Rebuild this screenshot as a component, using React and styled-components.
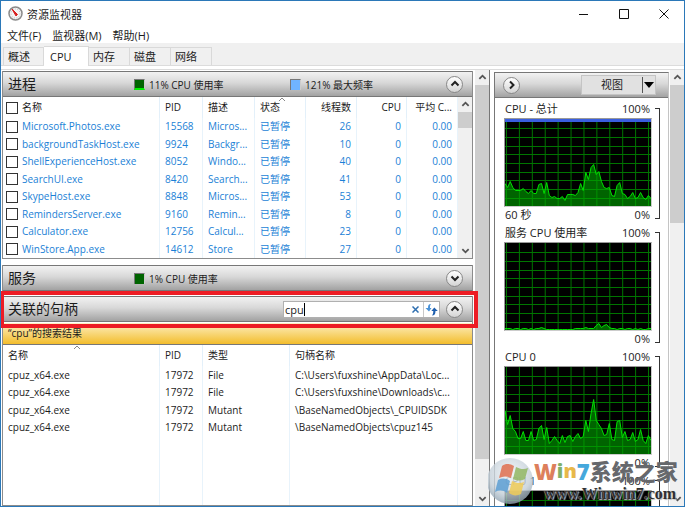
import React, { useState } from 'react';
import styled, { createGlobalStyle } from 'styled-components';

const GlobalStyle = createGlobalStyle`
   * {
      box-sizing: border-box;
   }
   body {
      margin: 0;
      background: #fff;
      color: #1c1c1c;
      font-family: "Open Sans", "Noto Sans CJK SC", sans-serif;
      font-size: 10px;
   }
   button, input {
      font: inherit;
      color: inherit;
      margin: 0;
      padding: 0;
      border: 0;
      border-radius: 0;
      background: none;
   }
`;

const processes = [
   ['Microsoft.Photos.exe', 15568, 'Micros...', 26],
   ['backgroundTaskHost.exe', 9924, 'Backgr...', 10],
   ['ShellExperienceHost.exe', 8052, 'Windo...', 40],
   ['SearchUI.exe', 8420, 'Search...', 41],
   ['SkypeHost.exe', 8848, 'Micros...', 53],
   ['RemindersServer.exe', 9160, 'Remin...', 8],
   ['Calculator.exe', 12756, 'Calcul...', 23],
   ['WinStore.App.exe', 14612, 'Store', 27],
];

const handles = [
   ['File', 'C:\\Users\\fuxshine\\AppData\\Loc...'],
   ['File', 'C:\\Users\\fuxshine\\Downloads\\c...'],
   ['Mutant', '\\BaseNamedObjects\\_CPUIDSDK'],
   ['Mutant', '\\BaseNamedObjects\\cpuz145'],
];

const totalLoad = [
   22, 18, 24, 18, 15, 15, 15, 17, 14, 12, 15, 12, 12, 21, 22, 12, 23, 10, 8,
   9, 7, 7, 9, 5, 11, 11, 11, 10, 13, 22, 15, 33, 26, 38, 41, 31, 34, 24, 18,
   17, 18, 10, 9, 20, 23, 12, 11, 7, 9, 13, 7, 8, 13, 8, 6, 10, 7,
];

const serviceLoad = [
   1, 1, 1, 0, 1, 1, 0, 1, 1, 0, 1, 0, 1, 1, 2, 1, 0, 0, 0,
   0, 0, 0, 0, 0, 0, 0, 0, 1, 1, 1, 1, 2, 1, 1, 1, 4, 6, 2, 4,
   5, 2, 1, 1, 0, 1, 1, 0, 1, 1, 0, 1, 0, 1, 0, 0, 1, 1,
];

const coreLoad = [
   43, 29, 38, 25, 22, 15, 15, 22, 13, 13, 22, 13, 14, 25, 28, 14, 26, 10, 13,
   17, 13, 10, 18, 11, 17, 18, 12, 17, 20, 15, 17, 33, 22, 40, 54, 33, 29, 25,
   18, 19, 30, 14, 13, 32, 33, 16, 22, 13, 14, 21, 12, 14, 24, 13, 10, 18, 13,
];

const Window = styled.div`
   position: relative;
   display: flex;
   flex-direction: column;
   height: 100vh;
   overflow: hidden;
   border: 1px solid #2b78b8;
   background: #fff;
`;

const TitleBar = styled.header`
   display: flex;
   align-items: center;
   flex: none;
   height: 25px;
   padding-left: 7px;
`;

const WindowTitle = styled.h1`
   flex: 1;
   margin: 0 0 0 4px;
   font-size: 11px;
   font-weight: normal;
`;

const WindowButton = styled.button`
   display: flex;
   align-items: center;
   justify-content: center;
   width: 40px;
   height: 25px;
`;

const MenuBar = styled.nav`
   display: flex;
   align-items: center;
   flex: none;
   gap: 11px;
   height: 17px;
   padding-left: 6px;
   font-size: 11px;
`;

const TabBar = styled.div`
   display: flex;
   align-items: flex-end;
   flex: none;
   height: 23px;
   padding-left: 2px;
   background: #f0f0f0;
   border-bottom: 1px solid #dcdcdc;
`;

const Tab = styled.button`
   height: ${(props) => (props.$active ? 20 : 18)}px;
   margin-bottom: ${(props) => (props.$active ? -1 : 0)}px;
   padding-left: ${(props) => (props.$active ? 6 : 4)}px;
   width: ${(props) => (props.$active ? 45 : 41)}px;
   border: 1px solid #d9d9d9;
   border-bottom: 0;
   border-left-width: ${(props) => (props.$first ? 1 : 0)}px;
   background: ${(props) => (props.$active ? '#fff' : '#f0f0f0')};
   font-size: 11px;
   line-height: 16px;
   text-align: left;
   white-space: nowrap;
`;

const Body = styled.main`
   display: flex;
   flex: 1;
   min-height: 0;
   margin-top: 3px;
   border-top: 1px solid #dcdcdc;
`;

const LeftPane = styled.div`
   display: flex;
   flex-direction: column;
   flex: 1;
   min-width: 0;
   margin: 1px 2px 0 1px;
`;

const Section = styled.section`
   position: relative;
   border: 1px solid #8c8c8c;
   border-top: 0;
   margin-bottom: ${(props) => props.$gap || 0}px;
   flex: ${(props) => (props.$grow ? 1 : 'none')};
   display: flex;
   flex-direction: column;
`;

const SectionHeader = styled.div`
   position: relative;
   display: flex;
   align-items: center;
   height: 26px;
   padding: 0 9px 0 5px;
   border-top: 1px solid #777;
   border-bottom: 1px solid #777;
   background: linear-gradient(#f2f2f2, #d8d8d8 45%, #a2a2a2);
`;

const SectionTitle = styled.h2`
   flex: none;
   width: 126px;
   margin: 0;
   font-size: 14px;
   font-weight: normal;
   line-height: 20px;
   white-space: nowrap;
`;

const Meter = styled.span`
   display: flex;
   align-items: center;
   gap: 4px;
   width: 159px;
   font-size: 10px;
`;

const Swatch = styled.i`
   width: 11px;
   height: 11px;
   border: 1px solid #ccc;
   border-top-color: #777;
   border-left-color: #777;
   background: ${(props) => props.$color};
   border-bottom: ${(props) => props.$level || 0}px solid #00f000;
`;

const RoundButton = styled.button`
   display: flex;
   align-items: center;
   justify-content: center;
   flex: none;
   width: 17px;
   height: 17px;
   margin-left: ${(props) => (props.$left ? 0 : 'auto')};
   border: 1px solid #888;
   border-radius: 50%;
   background: linear-gradient(#fff, #d4d4d4);
`;

// Red frame drawn around the header of the handle search
const Marker = styled.div`
   position: absolute;
   z-index: 2;
   inset: -5px -6px auto -3px;
   height: 37px;
   border: 4px solid #ed1c24;
   pointer-events: none;
`;

const SearchBox = styled.div`
   position: relative;
   display: flex;
   align-items: center;
   width: 157px;
   height: 17px;
   margin-left: auto;
   margin-right: 6px;
   border: 1px solid #b0b0b0;
   background: #fff;
`;

const SearchInput = styled.input`
   flex: 1;
   min-width: 0;
   padding-left: 1px;
   font-size: 11px;
   line-height: 15px;
   outline: 0;
   caret-color: transparent;
`;

const Caret = styled.i`
   position: absolute;
   left: 20px;
   top: 1px;
   width: 1px;
   height: 13px;
   background: #000;
`;

const SearchButton = styled.button`
   display: flex;
   align-items: center;
   justify-content: center;
   width: 16px;
   height: 15px;
   border-left: ${(props) => (props.$split ? '1px solid #c8c8c8' : 0)};
`;

const ResultBar = styled.div`
   height: 22px;
   margin-top: 1px;
   padding-left: 5px;
   border-bottom: 1px solid #777;
   background: linear-gradient(#fdf0c4, #f3bd2c);
   line-height: 21px;
`;

const TableArea = styled.div`
   display: flex;
   flex: 1;
   align-items: stretch;
`;

const Table = styled.table`
   flex: 1;
   width: 100%;
   height: ${(props) => props.$height};
   table-layout: fixed;
   border-collapse: separate;
   border-spacing: 0;
   color: ${(props) => props.$color};
   border-right: 1px solid #e8f3fb;
`;

const HeadCell = styled.th`
   position: relative;
   width: ${(props) => props.$width || 'auto'};
   height: 21px;
   padding: 0 5px;
   border-left: ${(props) => (props.$first ? 0 : '1px solid #e3f0fa')};
   color: #1c1c1c;
   font-weight: normal;
   line-height: 15px;
   text-align: ${(props) => (props.$right ? 'right' : 'left')};
   white-space: nowrap;
`;

const Cell = styled.td`
   padding: 0 5px;
   border-left: ${(props) => (props.$first ? 0 : '1px solid #e8f3fb')};
   line-height: 15px;
   text-align: ${(props) => (props.$right ? 'right' : 'left')};
   white-space: nowrap;
`;

const HandleRow = styled.tr`
   height: 17px;
   &:nth-child(odd) {
      height: 18px;
   }
`;

const HandleArea = styled(TableArea)`
   padding-right: 14px;
`;

const SortMark = styled.svg`
   position: absolute;
   top: 0;
   left: 45%;
   width: 8px;
   height: 5px;
`;

const CheckLabel = styled.label`
   display: flex;
   align-items: center;
   gap: 4px;
   margin-left: -2px;
`;

const Check = styled.input`
   appearance: none;
   width: 12px;
   height: 12px;
   border: 1px solid #333;
   background: ${(props) => (props.checked ? '#1b7fd6' : '#fff')};
`;

const Bar = styled.div`
   display: flex;
   flex-direction: column;
   flex: none;
   width: 14px;
   background: #f0f0f0;
`;

const BarButton = styled.button`
   display: flex;
   align-items: center;
   justify-content: center;
   height: 15px;
`;

const Track = styled.div`
   flex: 1;
`;

const Thumb = styled.div`
   height: ${(props) => props.$size};
   background: #cdcdcd;
`;

const RightPane = styled.aside`
   display: flex;
   flex: none;
   width: 195px;
   padding-left: 4px;
   border-left: 1px solid #777;
`;

const ChartPanel = styled.div`
   flex: 1;
   margin: 2px 1px 0 0;
   border: 1px solid #777;
   border-right-color: #c4c4c4;
   border-bottom: 0;
   overflow: hidden;
`;

const ChartHeader = styled.div`
   display: flex;
   align-items: center;
   justify-content: space-between;
   height: 25px;
   padding: 0 12px 0 8px;
   border-bottom: 1px solid #777;
   background: linear-gradient(#f2f2f2, #d8d8d8 45%, #a2a2a2);
`;

const ViewButton = styled.div`
   display: flex;
   width: 75px;
   height: 20px;
   border: 1px solid #c4c4c4;
   background: #e1e1e1;
`;

const ViewLabel = styled.button`
   flex: 1;
   font-size: 11px;
   line-height: 16px;
`;

const ViewArrow = styled.button`
   display: flex;
   align-items: center;
   width: 13px;
   margin: 1px 0;
   border-left: 1px solid #555;
`;

const ChartBlock = styled.figure`
   display: flex;
   height: 124px;
   margin: 0;
   padding: 3px 8px 0 9px;
   font-size: 11px;
`;

const ChartColumn = styled.div`
   flex: 1;
   min-width: 0;
`;

const ChartLine = styled.figcaption`
   display: flex;
   justify-content: space-between;
   height: 17px;
   padding: 0 2px 0 1px;
   line-height: 16px;
   white-space: nowrap;
`;

const Plot = styled.svg`
   display: block;
   width: 100%;
   height: 89px;
   border: 1px solid #999;
   border-right-color: #ccc;
   border-bottom-color: #ccc;
   background: #000;
`;

const Bracket = styled.div`
   width: 5px;
   height: 111px;
   margin: 7px 0 0 3px;
   border: 1px solid #333;
   border-left: 0;
`;

const Watermark = styled.div`
   position: absolute;
   z-index: 3;
   right: 2px;
   bottom: 0;
   display: flex;
   width: 194px;
   height: 49px;
   white-space: nowrap;
   pointer-events: none;
`;

const Brand = styled.div`
   display: flex;
   flex-direction: column;
`;

const BrandName = styled.div`
   display: flex;
   align-items: center;
   height: 28px;
   font-size: 22px;
   font-weight: 900;
   line-height: 28px;
   color: #66686c;
`;

const Letter = styled.span`
   color: ${(props) => props.$color};
   font-size: ${(props) => props.$size}px;
`;

const BrandUrl = styled.div`
   height: 18px;
   padding-left: 10px;
   font-family: "Liberation Serif", serif;
   font-size: 16px;
   font-weight: bold;
   line-height: 18px;
   color: #303030;
   text-shadow: 0 0 1px #ddd, 1px 1px 1px #bbb;
`;

const chevrons = {
   up: 'M1.5 6 5 2.5 8.5 6',
   down: 'M1.5 3 5 6.5 8.5 3',
   right: 'M3 1 6.5 4.5 3 8',
};

const Chevron = ({ to, size = 10, color = '#222', weight = 2 }) => (
   <svg width={size} height={size} viewBox="0 0 10 9">
      <path d={chevrons[to]} fill="none" stroke={color} strokeWidth={weight} />
   </svg>
);

const Scrollbar = ({ thumb }) => (
   <Bar>
      <BarButton aria-label="向上滚动">
         <Chevron to="up" size={9} color="#555" />
      </BarButton>
      <Track>
         <Thumb $size={thumb} />
      </Track>
      <BarButton aria-label="向下滚动">
         <Chevron to="down" size={9} color="#555" />
      </BarButton>
   </Bar>
);

const Sorted = () => (
   <SortMark viewBox="0 0 8 5">
      <path d="M1 4 4 1 7 4" fill="none" stroke="#888" />
   </SortMark>
);

const GaugeIcon = () => (
   <svg width="15" height="15" viewBox="0 0 15 15">
      <circle cx="7.5" cy="7.5" r="6.5" fill="#f4f4f4" stroke="#8a8a8a" strokeWidth="1.5" />
      <circle cx="7.5" cy="7.5" r="4.5" fill="none" stroke="#bbb" strokeDasharray="1 1.5" />
      <path d="M4 3 9.5 8.5 8 10Z" fill="#d81e1e" stroke="#d81e1e" />
   </svg>
);

const RefreshIcon = () => (
   <svg width="13" height="13" viewBox="0 0 13 13">
      <path d="M6 1C3.500 1 3 2.500 3 5H.5L4 8.500 6.500 5H5C5 3 5 2.500 6 1Z" fill="#4b93d8" />
      <path d="M7 12.500C9.500 12.500 10.500 11 10.500 8H12.800L9.300 4.500 6.300 8H8.300C8.300 10 8 11 7 12.500Z" fill="#1f5fae" />
   </svg>
);

const OrbLogo = () => (
   <svg width="46" height="48" viewBox="0 0 46 48">
      <defs>
         <radialGradient id="orb" cx="50%" cy="35%" r="65%">
            <stop offset="0" stopColor="#eef4f8" />
            <stop offset="0.7" stopColor="#c3ced7" />
            <stop offset="1" stopColor="#8ea1b0" />
         </radialGradient>
      </defs>
      <circle cx="22" cy="24" r="23" fill="url(#orb)" opacity="0.8" />
      <g opacity="0.85">
         <path d="M14 9C18 6 22 7 26 9L23 21C19 19 15 19 11 21Z" fill="#e07050" />
         <path d="M28 10C32 12 36 13 40 11L37 22C33 24 29 24 25 22Z" fill="#93b864" />
         <path d="M10 23C14 21 18 21 22 24L19 36C15 33 11 33 7 35Z" fill="#5d9fd4" />
         <path d="M24 24C28 26 32 27 36 25L33 37C29 39 25 39 21 36Z" fill="#f0cc58" />
      </g>
   </svg>
);

const columnLines = [1, 14, 27, 40, 53, 66, 79, 92, 105, 118, 131, 144];
const rowLines = [9, 18, 27, 35, 44, 53, 61, 70, 79];

const LoadChart = ({ title, values, span, capped }) => {
   const line = values.map((v, i) => `${(i * 147) / (values.length - 1)},${86.5 - v}`).join(' ');

   return (
      <ChartBlock>
         <ChartColumn>
            <ChartLine>
               <span>{title}</span>
               <span>100%</span>
            </ChartLine>
            <Plot viewBox="0 0 147 87" preserveAspectRatio="none">
               <polygon points={`0,87 ${line} 147,87`} fill="#006400" />
               <g stroke="#00a800" opacity="0.7">
                  {columnLines.map((x) => <path key={x} d={`M${x + 0.5} 0V87`} />)}
                  {rowLines.map((y) => <path key={y} d={`M0 ${y + 0.5}H147`} />)}
               </g>
               <polyline points={line} fill="none" stroke="#00e000" />
               {capped && <rect width="147" height="3" fill="#3a5fe0" />}
            </Plot>
            <ChartLine as="div">
               <span>{span}</span>
               <span>0%</span>
            </ChartLine>
         </ChartColumn>
         <Bracket />
      </ChartBlock>
   );
};

const ProcessTable = () => {
   const [picked, setPicked] = useState([]);
   const toggle = (name) => setPicked(
      picked.includes(name) ? picked.filter((n) => n !== name) : [...picked, name]
   );
   const all = picked.length === processes.length;

   return (
      <Table $color="#1b7fd6" $height="161px">
         <thead>
            <tr>
               <HeadCell $first>
                  <CheckLabel>
                     <Check
                        type="checkbox"
                        checked={all}
                        onChange={() => setPicked(all ? [] : processes.map((p) => p[0]))}
                     />
                     名称
                  </CheckLabel>
               </HeadCell>
               <HeadCell $width="43px">PID</HeadCell>
               <HeadCell $width="52px">描述</HeadCell>
               <HeadCell $width="51px">状态<Sorted /></HeadCell>
               <HeadCell $width="51px" $right>线程数</HeadCell>
               <HeadCell $width="50px" $right>CPU</HeadCell>
               <HeadCell $width="51px" $right>平均 C...</HeadCell>
            </tr>
         </thead>
         <tbody>
            {processes.map(([name, pid, about, threads]) => (
               <tr key={name}>
                  <Cell $first>
                     <CheckLabel>
                        <Check
                           type="checkbox"
                           checked={picked.includes(name)}
                           onChange={() => toggle(name)}
                        />
                        {name}
                     </CheckLabel>
                  </Cell>
                  <Cell>{pid}</Cell>
                  <Cell>{about}</Cell>
                  <Cell>已暂停</Cell>
                  <Cell $right>{threads}</Cell>
                  <Cell $right>0</Cell>
                  <Cell $right>0.00</Cell>
               </tr>
            ))}
         </tbody>
      </Table>
   );
};

const HandleTable = () => (
   <Table $color="#1c1c1c" $height="100%">
      <thead>
         <tr>
            <HeadCell $first>名称<Sorted /></HeadCell>
            <HeadCell $width="43px">PID</HeadCell>
            <HeadCell $width="87px">类型</HeadCell>
            <HeadCell $width="168px">句柄名称</HeadCell>
         </tr>
      </thead>
      <tbody>
         {handles.map(([type, path]) => (
            <HandleRow key={path}>
               <Cell $first>cpuz_x64.exe</Cell>
               <Cell>17972</Cell>
               <Cell>{type}</Cell>
               <Cell>{path}</Cell>
            </HandleRow>
         ))}
         <tr>
            <Cell $first />
            <Cell />
            <Cell />
            <Cell />
         </tr>
      </tbody>
   </Table>
);

const App = () => {
   const [query, setQuery] = useState('cpu');

   return (
      <>
         <GlobalStyle />
         <Window>
            <TitleBar>
               <GaugeIcon />
               <WindowTitle>资源监视器</WindowTitle>
               <WindowButton aria-label="最小化">
                  <svg width="10" height="10"><path d="M0 5.500H9" stroke="#111" /></svg>
               </WindowButton>
               <WindowButton aria-label="最大化">
                  <svg width="10" height="10"><path d="M.5 .5H9.500V9.500H.5Z" fill="none" stroke="#111" /></svg>
               </WindowButton>
               <WindowButton aria-label="关闭">
                  <svg width="10" height="10"><path d="M.5 .5 9.500 9.500M9.500 .5 .5 9.500" stroke="#111" /></svg>
               </WindowButton>
            </TitleBar>
            <MenuBar>
               <button>文件(F)</button>
               <button>监视器(M)</button>
               <button>帮助(H)</button>
            </MenuBar>
            <TabBar>
               <Tab $first>概述</Tab>
               <Tab $active>CPU</Tab>
               <Tab>内存</Tab>
               <Tab>磁盘</Tab>
               <Tab>网络</Tab>
            </TabBar>
            <Body>
               <LeftPane>
                  <Section $gap={6}>
                     <SectionHeader>
                        <SectionTitle>进程</SectionTitle>
                        <Meter><Swatch $color="#006400" $level={2} />11% CPU 使用率</Meter>
                        <Meter><Swatch $color="#70b4ff" />121% 最大频率</Meter>
                        <RoundButton aria-label="折叠进程"><Chevron to="up" /></RoundButton>
                     </SectionHeader>
                     <TableArea>
                        <ProcessTable />
                        <Scrollbar thumb="12%" />
                     </TableArea>
                  </Section>
                  <Section $gap={4}>
                     <SectionHeader>
                        <SectionTitle>服务</SectionTitle>
                        <Meter><Swatch $color="#006400" />1% CPU 使用率</Meter>
                        <RoundButton aria-label="展开服务"><Chevron to="down" /></RoundButton>
                     </SectionHeader>
                  </Section>
                  <Section $grow>
                     <SectionHeader>
                        <SectionTitle>关联的句柄</SectionTitle>
                        <SearchBox>
                           <SearchInput
                              aria-label="搜索句柄"
                              value={query}
                              onChange={(e) => setQuery(e.target.value)}
                           />
                           <Caret />
                           <SearchButton aria-label="清除" onClick={() => setQuery('')}>
                              <svg width="7" height="7"><path d="M.5 .5 6.500 6.500M6.500 .5 .5 6.500" stroke="#2f6fb0" strokeWidth="1.500" /></svg>
                           </SearchButton>
                           <SearchButton $split aria-label="刷新"><RefreshIcon /></SearchButton>
                        </SearchBox>
                        <RoundButton $left aria-label="折叠句柄"><Chevron to="up" /></RoundButton>
                     </SectionHeader>
                     <Marker />
                     <ResultBar>“cpu”的搜索结果</ResultBar>
                     <HandleArea>
                        <HandleTable />
                     </HandleArea>
                  </Section>
               </LeftPane>
               <Scrollbar thumb="92%" />
               <RightPane>
                  <ChartPanel>
                     <ChartHeader>
                        <RoundButton $left aria-label="隐藏图表"><Chevron to="right" /></RoundButton>
                        <ViewButton>
                           <ViewLabel>视图</ViewLabel>
                           <ViewArrow aria-label="视图选项">
                              <svg width="11" height="6"><path d="M1 0H11L6 6Z" fill="#000" /></svg>
                           </ViewArrow>
                        </ViewButton>
                     </ChartHeader>
                     <LoadChart title="CPU - 总计" values={totalLoad} span="60 秒" capped />
                     <LoadChart title="服务 CPU 使用率" values={serviceLoad} />
                     <LoadChart title="CPU 0" values={coreLoad} />
                     <LoadChart title="CPU 1" values={coreLoad} />
                  </ChartPanel>
                  <Scrollbar thumb="34%" />
               </RightPane>
            </Body>
            <Watermark>
               <OrbLogo />
               <Brand>
                  <BrandName>
                     <Letter $color="#dd7f5c" $size={22}>W</Letter>
                     <Letter $color="#7fb069" $size={20}>i</Letter>
                     <Letter $color="#e8b84a" $size={20}>n</Letter>
                     <Letter $color="#45a8dc" $size={22}>7</Letter>
                     系统之家
                  </BrandName>
                  <BrandUrl>www.Winwin7.com</BrandUrl>
               </Brand>
            </Watermark>
         </Window>
      </>
   );
};

export default App;
